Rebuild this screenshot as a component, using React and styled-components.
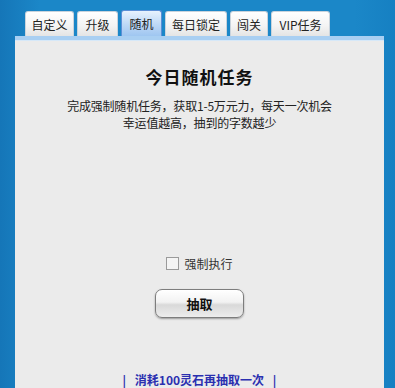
import React, { useState } from "react";
import styled, { createGlobalStyle } from "styled-components";

const GlobalStyle = createGlobalStyle`
  html, body {
    margin: 0;
    padding: 0;
    background: #1b87c8;
  }
  body {
    font-family: "Noto Sans CJK SC", "Liberation Sans", sans-serif;
  }
`;

const Page = styled.div`
  width: 395px;
  height: 388px;
  background: linear-gradient(90deg, #1576b8 0px, #1b87c8 40px, #1b87c8 355px, #1680c2 395px);
  padding: 10px 11px 0 15px;
  box-sizing: border-box;
  display: flex;
  flex-direction: column;
  overflow: hidden;
`;

const TabBar = styled.div`
  display: flex;
  align-items: flex-end;
  gap: 3px;
  padding-left: 10px;
  height: 26px;
`;

const Tab = styled.div`
  height: ${(p) => (p.$active ? "26px" : "25px")};
  width: ${(p) => p.$w}px;
  box-sizing: border-box;
  display: flex;
  align-items: center;
  justify-content: center;
  font-size: 12px;
  color: #222;
  border-radius: 3px 3px 0 0;
  border: 1px solid ${(p) => (p.$active ? "#5b8fd6" : "#c9d3dc")};
  border-bottom: none;
  background: ${(p) =>
    p.$active
      ? "linear-gradient(180deg, #e8f2fd 0%, #bcd8f6 55%, #9fc6f1 100%)"
      : "linear-gradient(180deg, #ffffff 0%, #f3f3f3 60%, #e4e4e4 100%)"};
  cursor: pointer;
`;

const Panel = styled.div`
  flex: 1;
  background: #ebebeb;
  border-top: 4px solid #a9cff2;
  box-shadow: inset 0 1px 0 #d6e8f8;
  display: flex;
  flex-direction: column;
  align-items: center;
  padding-top: 25px;
`;

const Title = styled.h2`
  margin: 0;
  font-size: 17px;
  font-weight: bold;
  color: #111;
  letter-spacing: 1px;
  line-height: 24px;
`;

const Desc = styled.p`
  margin: 8px 0 0;
  font-size: 12px;
  line-height: 17px;
  color: #222;
  text-align: center;
  letter-spacing: -0.2px;
`;

const CheckRow = styled.label`
  margin-top: 124px;
  display: flex;
  align-items: center;
  gap: 5px;
  font-size: 12px;
  color: #333;
`;

const Box = styled.span`
  width: 11px;
  height: 11px;
  border: 1px solid #9a9a9a;
  background: #f4f4f4;
  display: inline-block;
`;

const DrawButton = styled.button`
  margin-top: 17px;
  width: 89px;
  height: 29px;
  border-radius: 7px;
  border: 1px solid #7d7d7d;
  background: linear-gradient(180deg, #ffffff 0%, #f2f2f2 45%, #d9d9d9 55%, #ededed 100%);
  box-shadow: inset 0 1px 0 #fff, 0 1px 2px rgba(0, 0, 0, 0.35);
  font-family: "Noto Sans CJK SC", sans-serif;
  font-size: 13px;
  font-weight: bold;
  color: #111;
  cursor: pointer;
`;

const Footer = styled.div`
  margin-top: 53px;
  font-size: 12px;
  font-weight: bold;
  color: #2a2fb0;
  word-spacing: 6px;
`;

const tabs = [
  ["自定义", 49],
  ["升级", 41],
  ["随机", 41],
  ["每日锁定", 62],
  ["闯关", 38],
  ["VIP任务", 59],
];

export default function App() {
  const [checked, setChecked] = useState(false);
  return (
    <>
      <GlobalStyle />
      <Page>
        <TabBar>
          {tabs.map(([t, w]) => (
            <Tab key={t} $w={w} $active={t === "随机"}>
              {t}
            </Tab>
          ))}
        </TabBar>
        <Panel>
          <Title>今日随机任务</Title>
          <Desc>
            完成强制随机任务，获取1-5万元力，每天一次机会
            <br />
            幸运值越高，抽到的字数越少
          </Desc>
          <CheckRow onClick={() => setChecked(!checked)}>
            <Box>{checked ? "✓" : ""}</Box>
            强制执行
          </CheckRow>
          <DrawButton>抽取</DrawButton>
          <Footer>| 消耗100灵石再抽取一次 |</Footer>
        </Panel>
      </Page>
    </>
  );
}
